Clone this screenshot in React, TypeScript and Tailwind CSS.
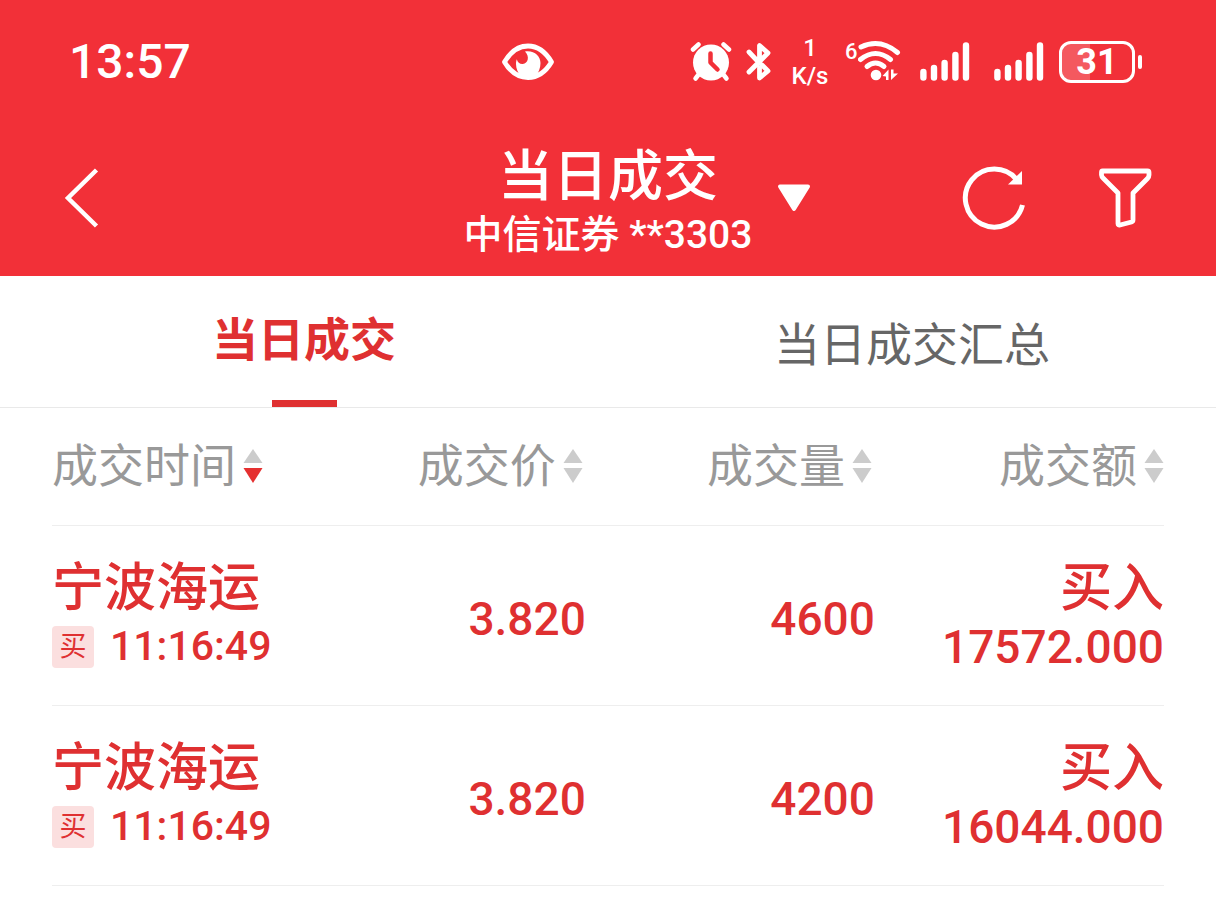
import { useState } from 'react';

type Trade = { id: number; name: string; time: string; side: string; price: string; volume: string; amount: string };

const trades: Trade[] = [
  { id: 1, name: '宁波海运', time: '11:16:49', side: '买', price: '3.820', volume: '4600', amount: '17572.000' },
  { id: 2, name: '宁波海运', time: '11:16:49', side: '买', price: '3.820', volume: '4200', amount: '16044.000' },
];

const columns = ['成交时间', '成交价', '成交量', '成交额'];

function SignalIcon() {
  return (
    <svg width="50" height="42" viewBox="0 0 50 42" stroke="white" strokeWidth="6.4" strokeLinecap="round">
      <path d="M3.4 31v5.6M14 27v9.6M24.6 22v14.6M35.4 14v22.6M46 4.4v32.2" />
    </svg>
  );
}

function StatusBar() {
  return (
    <div className="flex items-center h-[124px] pl-[69px] pr-[74px]">
      <span className="text-[48px] leading-[48px] font-medium">13:57</span>
      <svg className="ml-auto mr-[136px]" width="52" height="38" viewBox="0 0 52 38">
        <path d="M2.5 19C9 8 17 3 26 3S43 8 49.500 19C43 30 35 34.500 26 34.500S9 30 2.500 19Z" fill="none" stroke="white" strokeWidth="4.800" strokeLinejoin="round" />
        <path d="M23 8.500C32 7 38.500 13 38.500 20C38.500 25 36.500 30 33.500 33.500H19C16 30 14 26 14 21C14 19 14.300 17.500 14.800 16.200C15.500 19.500 18 21.300 20.800 21C26 20.500 28 13.500 23 8.500Z" fill="white" />
      </svg>
      <div className="flex items-center">
        <svg width="42" height="42" viewBox="0 0 42 42">
          <path d="M3 8.500L8.500 3.500M33.500 3.500L39 8.500" stroke="white" strokeWidth="4.500" strokeLinecap="round" />
          <path d="M9 33L5.500 37.500M33 33L36.500 37.500" stroke="white" strokeWidth="4.500" strokeLinecap="round" />
          <circle cx="21" cy="21.500" r="18" fill="white" />
          <path d="M20.500 12.500V21.500L27.500 28.500" fill="none" stroke="#f23038" strokeWidth="4.500" strokeLinecap="round" strokeLinejoin="round" />
        </svg>
        <svg className="ml-[14px]" width="26" height="42" viewBox="0 0 26 42">
          <path d="M3 11L11 19.500M3 31L22 12L13.500 4.500V19M13.500 27V37L22 30L16 24" fill="none" stroke="white" strokeWidth="4.800" strokeLinecap="round" strokeLinejoin="round" />
        </svg>
        <div className="ml-[18px] w-10 flex flex-col items-center text-[24px] leading-[28px] font-medium">
          <span>1</span>
          <span>K/s</span>
        </div>
        <div className="ml-[15px] flex">
          <span className="w-[13px] text-[22px] leading-[24px] font-medium">6</span>
          <svg width="44" height="44" viewBox="12 0 44 44">
            <g fill="none" stroke="white" strokeWidth="5" strokeLinecap="round">
              <path d="M15 7Q34 -2 51.500 12.500" />
              <path d="M14.500 19.500Q29.500 7.500 44.500 19.500" />
              <path d="M21 26.500Q29.500 19.500 38 26.500" />
            </g>
            <circle cx="30" cy="35" r="5.300" fill="white" />
            <path d="M36.500 36L42.500 29.500V40H40V36.500Z" fill="white" />
            <path d="M45 29.500H47.500V33.500H52L45 40Z" fill="white" />
          </svg>
        </div>
        <div className="ml-[18px] flex gap-6">
          <SignalIcon />
          <SignalIcon />
        </div>
        <div className="ml-[15px] relative flex items-center justify-center w-[76px] h-[42px] rounded-xl border-[3px] border-white overflow-hidden">
          <div className="absolute inset-y-0 left-0 w-[28px] bg-white/20" />
          <span className="relative text-[36px] leading-[36px] font-bold">31</span>
        </div>
        <div className="ml-[3px] w-1 h-[14px] rounded-full bg-white" />
      </div>
    </div>
  );
}

function Header() {
  return (
    <header className="bg-[#f23038] text-white">
      <StatusBar />
      <div className="grid grid-cols-[1fr_auto_1fr] items-center h-[152px] px-16 pb-1">
        <button aria-label="返回" className="justify-self-start">
          <svg width="36" height="60" viewBox="0 0 36 60" fill="none" stroke="white" strokeWidth="4.500">
            <path d="M32.500 2L4 30L32.500 58" />
          </svg>
        </button>
        <div className="flex flex-col items-center pt-2.5 font-medium">
          <h1 className="text-[55px] leading-[64px]">当日成交</h1>
          <p className="text-[39px] leading-[54px]">中信证券 **3303</p>
        </div>
        <div className="flex items-center">
          <button aria-label="切换账户" className="ml-[25px]">
            <svg width="34" height="28" viewBox="0 0 34 28">
              <path d="M3 2.500H31L17 25Z" fill="white" stroke="white" strokeWidth="4" strokeLinejoin="round" />
            </svg>
          </button>
          <button aria-label="刷新" className="ml-auto">
            <svg width="64" height="64" viewBox="0 0 64 64">
              <path d="M60.500 39A29 29 0 1 1 55 14" fill="none" stroke="white" strokeWidth="5" />
              <path d="M60 5V18.500H46Z" fill="white" />
            </svg>
          </button>
          <button aria-label="筛选" className="ml-[72px]">
            <svg width="54" height="60" viewBox="0 0 54 60" fill="none" stroke="white" strokeWidth="4.800" strokeLinejoin="round">
              <path d="M4.500 3H49.500Q51 3 51 4.500V7Q51 9 49.500 10.500L35 25V52Q35 53.500 33.500 54L22 57Q20 57.500 20 55.500V25L5.500 10.500Q3.500 8.500 3.500 7V4.500Q3.500 3 4.500 3Z" />
            </svg>
          </button>
        </div>
      </div>
    </header>
  );
}

export default function App() {
  const [tab, setTab] = useState(0);
  const [sort, setSort] = useState(0);

  return (
    <div className="min-h-screen bg-white font-[Roboto,'Noto_Sans_CJK_SC',sans-serif]">
      <Header />
      <nav className="grid grid-cols-2 h-[132px] border-b border-[#e9e9e9]">
        {['当日成交', '当日成交汇总'].map((label, i) => (
          <button
            key={label}
            onClick={() => setTab(i)}
            className={`flex flex-col items-center text-[46px] ${tab === i ? 'pt-1 font-bold text-[#df3031]' : 'justify-center pt-2 text-[#666]'}`}
          >
            <span className={tab === i ? 'flex-1 flex items-center' : ''}>{label}</span>
            {tab === i && <span className="w-[65px] h-[7px] bg-[#df3031]" />}
          </button>
        ))}
      </nav>
      <main className="px-[52px]">
        <table className="w-full table-fixed">
          <thead>
            <tr className="h-[117px] border-b border-[#eee]">
              {columns.map((label, i) => (
                <th key={label} className={`p-0 font-normal ${i === 0 ? '' : 'w-[26%]'} ${i === 1 || i === 2 ? 'pr-[3px]' : ''}`}>
                  <button
                    onClick={() => setSort(i)}
                    className={`flex items-center gap-[7px] text-[46px] text-[#999] whitespace-nowrap ${i === 0 ? '' : 'ml-auto'}`}
                  >
                    {label}
                    <svg width="20" height="36" viewBox="0 0 20 36">
                      <path d="M10 1L19.500 15H0.500Z" fill="#ccc" />
                      <path d="M10 35L19.500 20H0.500Z" fill={sort === i ? '#e53030' : '#ccc'} />
                    </svg>
                  </button>
                </th>
              ))}
            </tr>
          </thead>
          <tbody className="text-[#df3031] font-medium">
            {trades.map((trade) => (
              <tr key={trade.id} className="h-[180px] border-b border-[#eee]">
                <td className="p-0 pt-1">
                  <div className="text-[52px] leading-[60px] whitespace-nowrap">{trade.name}</div>
                  <div className="flex items-center gap-4 h-[56px]">
                    <span className="flex items-center justify-center size-[42px] rounded bg-[#fbdfdf] text-[27px] font-normal">{trade.side}</span>
                    <span className="text-[41px]">{trade.time}</span>
                  </div>
                </td>
                <td className="p-0 pt-2 text-right text-[46px]">{trade.price}</td>
                <td className="p-0 pt-2 text-right text-[46px]">{trade.volume}</td>
                <td className="p-0 pt-1 text-right">
                  <div className="text-[52px] leading-[60px]">买入</div>
                  <div className="text-[46px] leading-[56px]">{trade.amount}</div>
                </td>
              </tr>
            ))}
          </tbody>
        </table>
      </main>
    </div>
  );
}
